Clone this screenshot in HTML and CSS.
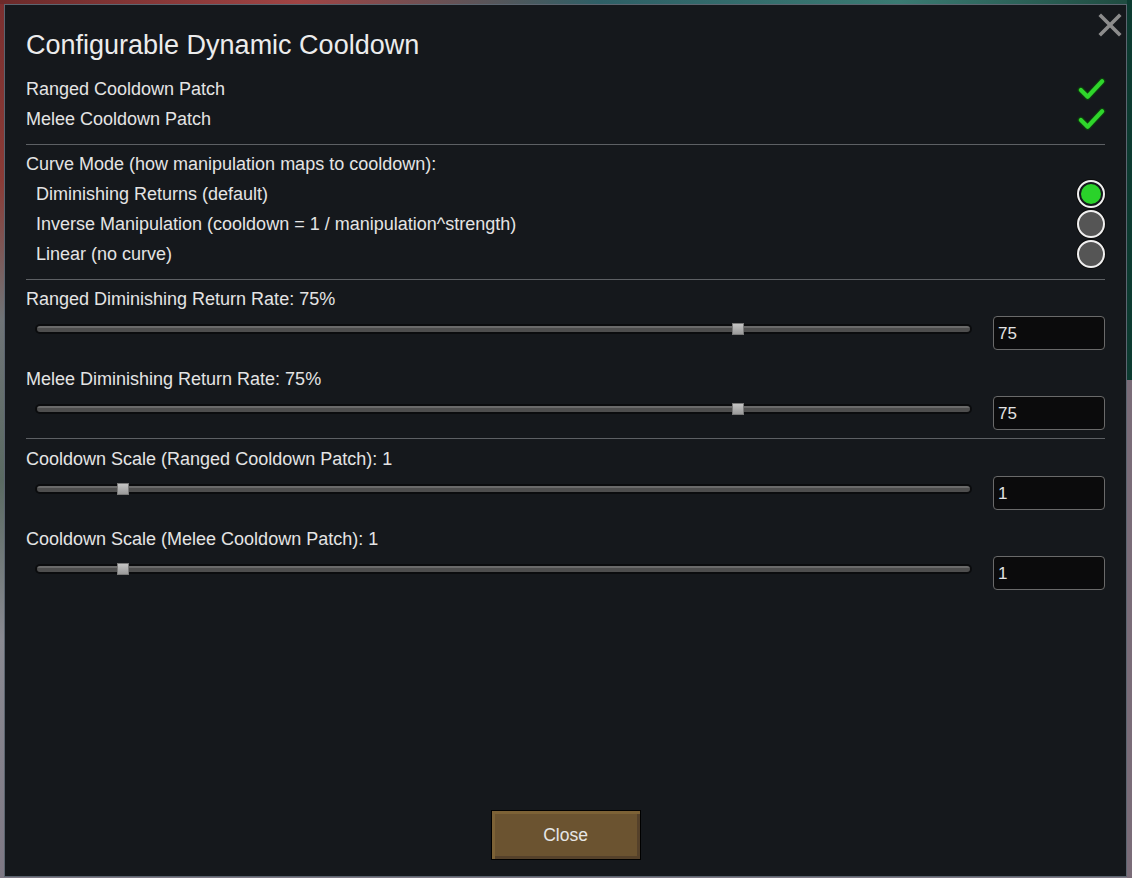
FILE: index.html
```html
<!DOCTYPE html>
<html>
<head>
<meta charset="utf-8">
<title>Configurable Dynamic Cooldown</title>
<link rel="stylesheet" href="styles.css">
</head>
<body>
<div class="backdrop">
  <div class="dialog">
    <button class="close-x" aria-label="Close">
      <svg width="24" height="24" viewBox="0 0 24 24"><path d="M3 3 L21 21 M21 3 L3 21" stroke="#8c8c8c" stroke-width="3.6" stroke-linecap="square" fill="none"/></svg>
    </button>
    <h1 class="title">Configurable Dynamic Cooldown</h1>

    <div class="row">
      <span class="label">Ranged Cooldown Patch</span>
      <svg class="check" width="30" height="26" viewBox="0 0 30 26"><path d="M4 14 L11 21 L26 5" stroke="#0e3a10" stroke-width="7" stroke-linecap="round" stroke-linejoin="round" fill="none"/><path d="M4 14 L11 21 L26 5" stroke="#2fd62b" stroke-width="4.4" stroke-linecap="round" stroke-linejoin="round" fill="none"/></svg>
    </div>
    <div class="row">
      <span class="label">Melee Cooldown Patch</span>
      <svg class="check" width="30" height="26" viewBox="0 0 30 26"><path d="M4 14 L11 21 L26 5" stroke="#0e3a10" stroke-width="7" stroke-linecap="round" stroke-linejoin="round" fill="none"/><path d="M4 14 L11 21 L26 5" stroke="#2fd62b" stroke-width="4.4" stroke-linecap="round" stroke-linejoin="round" fill="none"/></svg>
    </div>

    <div class="sep"></div>

    <div class="row"><span class="label">Curve Mode (how manipulation maps to cooldown):</span></div>
    <div class="row indent">
      <span class="label">Diminishing Returns (default)</span>
      <span class="radio on"><span class="dot"></span></span>
    </div>
    <div class="row indent">
      <span class="label">Inverse Manipulation (cooldown = 1 / manipulation^strength)</span>
      <span class="radio"></span>
    </div>
    <div class="row indent">
      <span class="label">Linear (no curve)</span>
      <span class="radio"></span>
    </div>

    <div class="sep"></div>

    <div class="row"><span class="label">Ranged Diminishing Return Rate: 75%</span></div>
    <div class="control">
      <div class="slider"><div class="track"></div><div class="handle" style="left: 75%"></div></div>
      <div class="field">75</div>
    </div>
    <div class="row gap"><span class="label">Melee Diminishing Return Rate: 75%</span></div>
    <div class="control">
      <div class="slider"><div class="track"></div><div class="handle" style="left: 75%"></div></div>
      <div class="field">75</div>
    </div>

    <div class="sep sep-tight"></div>

    <div class="row"><span class="label">Cooldown Scale (Ranged Cooldown Patch): 1</span></div>
    <div class="control">
      <div class="slider"><div class="track"></div><div class="handle" style="left: 9.4%"></div></div>
      <div class="field">1</div>
    </div>
    <div class="row gap"><span class="label">Cooldown Scale (Melee Cooldown Patch): 1</span></div>
    <div class="control">
      <div class="slider"><div class="track"></div><div class="handle" style="left: 9.4%"></div></div>
      <div class="field">1</div>
    </div>

    <div class="footer">
      <button class="btn">Close</button>
    </div>
  </div>
</div>
</body>
</html>
```

FILE: styles.css
```css
* { box-sizing: border-box; }
html, body { margin: 0; padding: 0; }
body {
  width: 1132px;
  height: 878px;
  overflow: hidden;
  font-family: "Liberation Sans", Arial, sans-serif;
  background: linear-gradient(180deg, #7b2f2f 0, #8a3b36 180px, #6f7477 320px, #5a6a62 480px, #8a8a92 640px, #7e7884 878px);
}
.backdrop {
  padding: 4px 0 0 4px;
  height: 878px;
  background:
    linear-gradient(180deg, #0d3b31 0 380px, #7a6c78 380px 878px) right top / 5px 878px no-repeat,
    linear-gradient(90deg, #6c2a2a 0, #a04444 300px, #2e5f66 600px, #3a7a72 900px, #1f4b40 1132px) left top / 1132px 4px no-repeat;
}
.dialog {
  position: relative;
  width: 1123px;
  height: 873px;
  background: #15181c;
  border: 1px solid #5c6570;
  padding: 25px 21px 16px 21px;
  display: flex;
  flex-direction: column;
  color: #e4e4e4;
}
.close-x {
  position: absolute;
  top: 7px;
  right: 3px;
  width: 26px;
  height: 26px;
  padding: 1px;
  background: none;
  border: 0;
}
.title {
  margin: 0 0 14px 0;
  font-weight: normal;
  font-size: 27px;
  line-height: 30px;
  color: #ececec;
}
.row {
  height: 30px;
  display: flex;
  align-items: center;
  justify-content: space-between;
  font-size: 18px;
}
.row.indent { padding-left: 10px; }
.row.gap { margin-top: 14px; }
.label { white-space: nowrap; }
.check { margin-right: -1px; width: 29px; }
.sep {
  height: 1px;
  background: #5d6064;
  margin: 10px 0 4px 0;
  flex: none;
}
.sep.sep-tight { margin-top: 8px; margin-bottom: 5px; }
.radio {
  width: 28px;
  height: 28px;
  border-radius: 50%;
  border: 2px solid #f0f0f0;
  background: #555555;
  box-shadow: 0 0 0 1px #0c0c0c;
  display: flex;
  align-items: center;
  justify-content: center;
  flex: none;
}
.radio.on { background: #15181c; }
.radio .dot {
  width: 20px;
  height: 20px;
  border-radius: 50%;
  background: #2ad22a;
}
.control {
  margin-top: 2px;
  height: 34px;
  display: flex;
  align-items: flex-start;
  flex: none;
}
.slider {
  position: relative;
  margin: 8px 21px 0 9px;
  flex: 1;
  height: 10px;
}
.track {
  height: 10px;
  border-radius: 5px;
  background: #0b0c0e;
  padding: 2px;
}
.track::before {
  content: "";
  display: block;
  height: 6px;
  border-radius: 3px;
  background: linear-gradient(180deg, #6a6a6a 0 2px, #4e4e4e 2px);
}
.handle {
  position: absolute;
  top: -1px;
  width: 12px;
  height: 12px;
  margin-left: -6px;
  background: linear-gradient(180deg, #c4c4c4, #9a9a9a);
  border: 1px solid #7a7a7a;
}
.field {
  width: 112px;
  height: 34px;
  background: #0b0b0c;
  border: 1px solid #6a6a6a;
  border-radius: 4px;
  padding: 0 4px;
  font-size: 17px;
  line-height: 32px;
  color: #e2e2e2;
  padding-top: 1px;
  flex: none;
}
.footer {
  margin-top: auto;
  display: flex;
  justify-content: center;
}
.btn {
  width: 150px;
  height: 50px;
  border: 1px solid #000;
  background: #6b5330;
  box-shadow: inset 3px 3px 0 #7d6236, inset -3px -3px 0 #55412a;
  color: #e6e6e6;
  font-family: "Liberation Sans", Arial, sans-serif;
  font-size: 17.5px;
  padding: 0;
}
```
